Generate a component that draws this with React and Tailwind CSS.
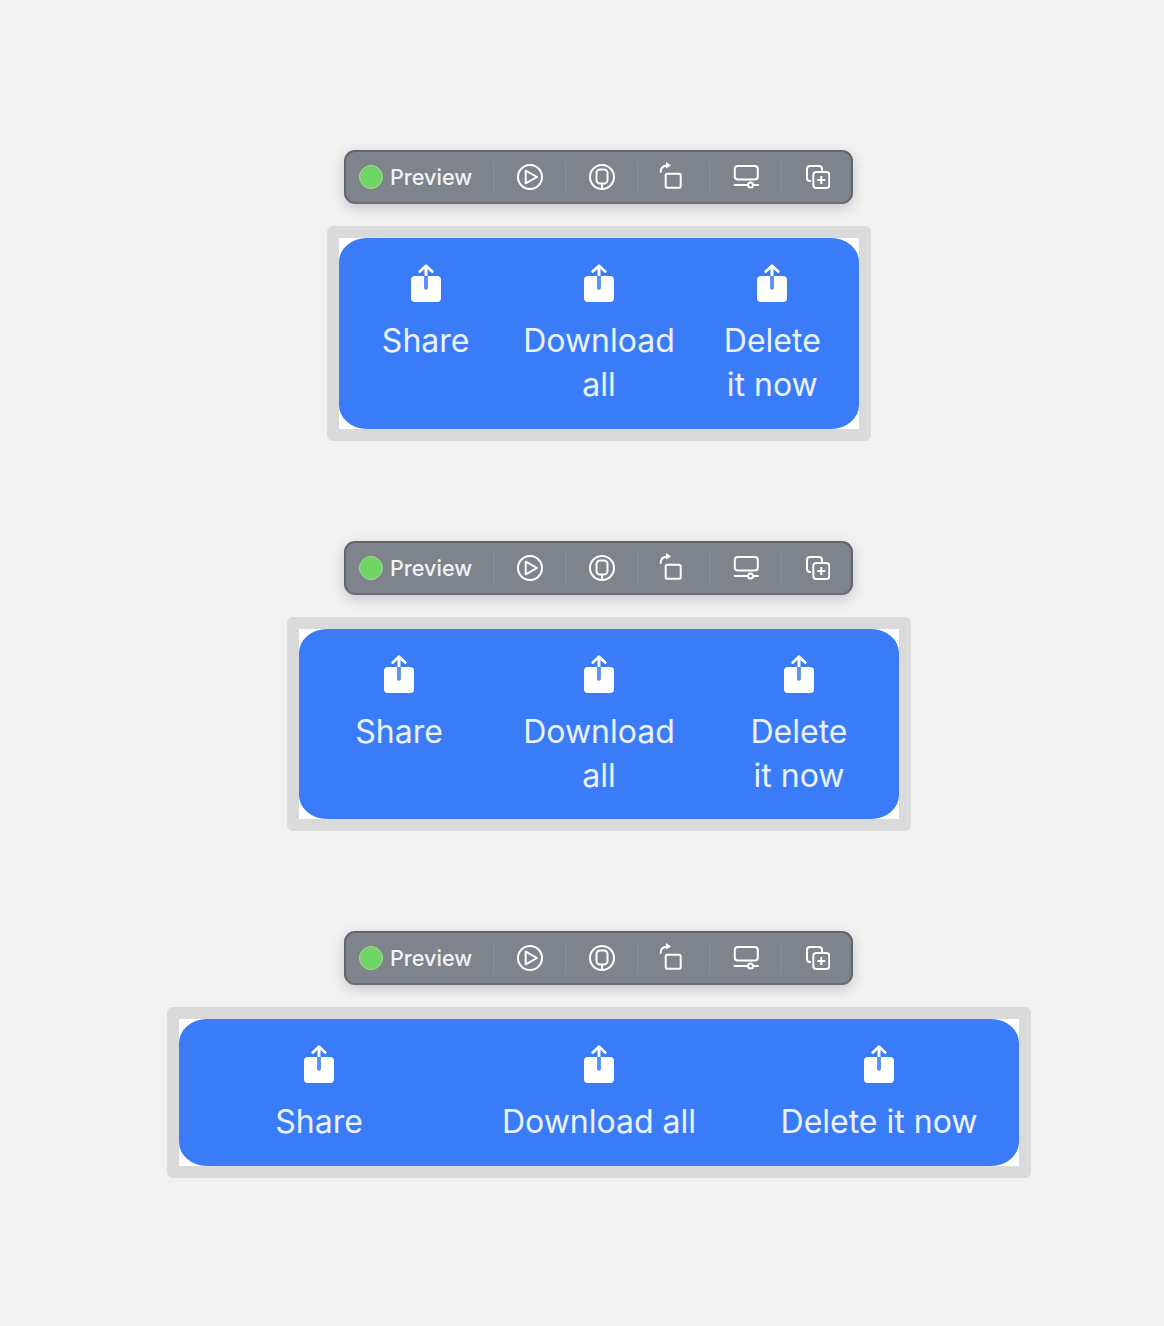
import React from "react";

const font = { fontFamily: "Inter, sans-serif" };

function ShareIcon() {
  return (
    <svg width="30" height="39" viewBox="0 0 30 39" className="block">
      <rect x="0" y="12" width="30" height="26" rx="4" fill="#fff" />
      <path d="M15 24V12" stroke="#3a7cf7" strokeWidth="3.6" strokeLinecap="round" />
      <path d="M15 12V3" stroke="#fff" strokeWidth="3" strokeLinecap="butt" />
      <path d="M15 24V13" stroke="#fff" strokeOpacity="0.35" strokeWidth="1" strokeLinecap="round" />
      <path d="M8.8 7.6L15 1.8l6.2 5.8" fill="none" stroke="#fff" strokeWidth="2.8" strokeLinecap="round" strokeLinejoin="round" />
    </svg>
  );
}

function Item({ lines }) {
  return (
    <div className="flex flex-col items-center text-center">
      <div className="h-[59px] pt-[4px]">
        <ShareIcon />
      </div>
      <div className="text-[32px] leading-[44px] text-white/90" style={font}>
        {lines.map((l) => (
          <div key={l}>{l}</div>
        ))}
      </div>
    </div>
  );
}

function Frame({ width, items }) {
  return (
    <div className="mt-[22px] border-[12px] border-[#dadada] rounded-[6px] bg-white box-content" style={{ width }}>
      <div className="grid grid-cols-3 bg-[#3a7cf7] rounded-[28px/24px] pt-[22px] pb-[21.5px]">
        {items.map((l) => (
          <Item key={l[0]} lines={l} />
        ))}
      </div>
    </div>
  );
}

const I = { fill: "none", stroke: "#fff", strokeWidth: 2 };

function Cell({ children }) {
  return (
    <div className="relative w-[72px] h-full pl-[1px] flex items-center justify-center last:w-[71px]">
      <div className="absolute left-0 top-[9px] bottom-[9px] w-[2px] bg-white/[0.06]" />
      {children}
    </div>
  );
}

function Toolbar() {
  return (
    <div className="flex items-center w-[509px] h-[54px] mr-[1px] rounded-[11px] bg-[#7e838c] border-[2px] border-[#62656f] border-b-[#6b6e78] shadow-[0_4px_14px_rgba(0,0,0,0.18)]">
      <div className="flex items-center w-[148px] h-full pl-[13px]">
        <div className="w-[24px] h-[24px] rounded-full bg-[#6fd663] border border-[#a5d9a0]" />
        <span className="ml-[7px] pt-[2px] text-[21.6px] leading-none font-medium text-white/90" style={font}>Preview</span>
      </div>
      <Cell>
        <svg width="28" height="28" viewBox="0 0 28 28" {...I}>
          <circle cx="14" cy="14" r="12" />
          <path d="M9.7 7.7L21 14L9.7 20.3z" strokeLinejoin="round" />
        </svg>
      </Cell>
      <Cell>
        <svg width="28" height="28" viewBox="0 0 28 28" {...I}>
          <circle cx="14" cy="14" r="12" />
          <rect x="8.5" y="6.5" width="11" height="14" rx="3.5" />
          <path d="M14 20.5V26" />
        </svg>
      </Cell>
      <Cell>
        <svg width="28" height="30" viewBox="0 0 28 30" {...I}>
          <rect x="6.7" y="11.7" width="15" height="14" rx="1.5" />
          <path d="M1.7 10C1.7 6.5 3.7 4 7.5 3.8" strokeLinecap="round" />
          <path d="M7 0L12 3.5L7 6.5z" fill="#fff" stroke="none" />
        </svg>
      </Cell>
      <Cell>
        <svg width="28" height="28" viewBox="-1.5 0 28 28" {...I}>
          <rect x="2.3" y="3" width="23" height="13.5" rx="3" />
          <path d="M1.3 22h13.7M21 22h5.3" />
          <circle cx="18" cy="22" r="2.5" />
        </svg>
      </Cell>
      <Cell>
        <svg width="28" height="28" viewBox="-2 0 28 28" {...I}>
          <path d="M7 18H6a3 3 0 0 1-3-3V6a3 3 0 0 1 3-3h9a3 3 0 0 1 3 3v2" />
          <rect x="9.3" y="9" width="16" height="16" rx="3" />
          <path d="M17.3 13v8M13.3 17h8" />
        </svg>
      </Cell>
    </div>
  );
}

export default function App() {
  const stacked = [["Share"], ["Download", "all"], ["Delete", "it now"]];
  const flat = [["Share"], ["Download all"], ["Delete it now"]];
  const sets = [
    { width: 520, items: stacked },
    { width: 600, items: stacked },
    { width: 840, items: flat },
  ];
  return (
    <div className="min-h-[1326px] bg-[#f2f2f2] pt-[150px] pl-[34px] flex flex-col items-center">
      {sets.map((s, i) => (
        <div key={s.width} className={i ? "flex flex-col items-center mt-[100px]" : "flex flex-col items-center"}>
          <Toolbar />
          <Frame width={s.width} items={s.items} />
        </div>
      ))}
    </div>
  );
}
